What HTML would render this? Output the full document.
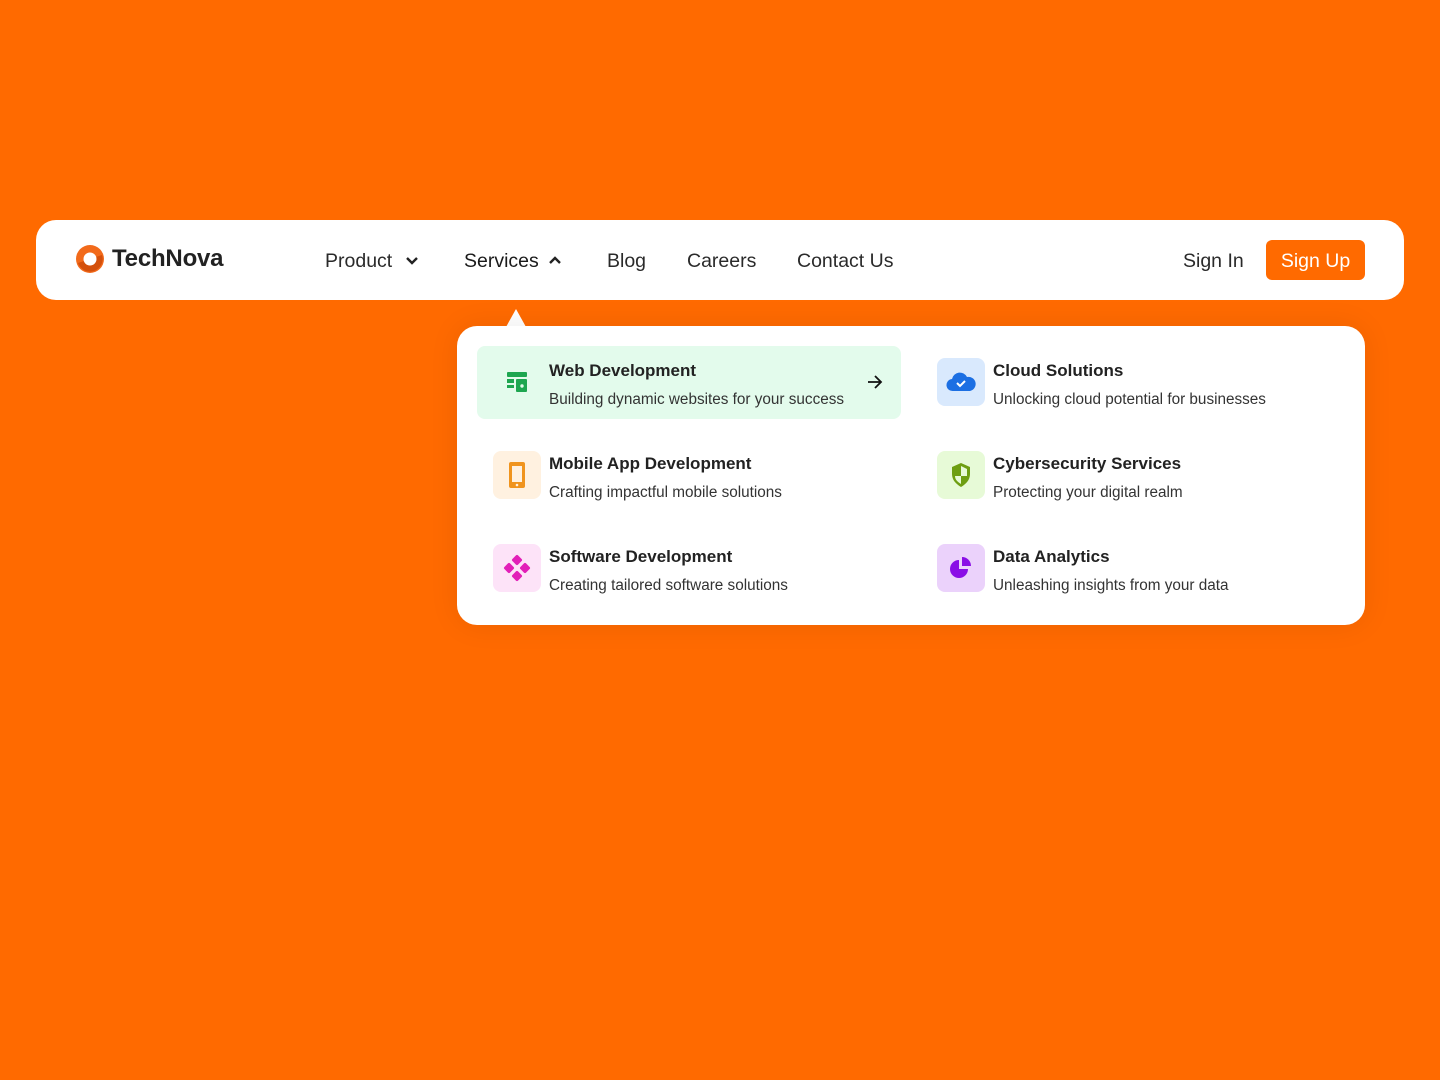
<!DOCTYPE html>
<html><head><meta charset="utf-8"><style>
*{margin:0;padding:0;box-sizing:border-box}
body{width:1440px;height:1080px;background:#FF6A00;font-family:"Liberation Sans",sans-serif;position:relative;overflow:hidden;color:#1f1f1f}
.nav{position:absolute;left:36px;top:220px;width:1368px;height:80px;background:#fff;border-radius:20px}
.t{position:absolute;white-space:nowrap}
.nl{font-size:19.5px;top:30px;color:#2a2a2a}
.dd{position:absolute;left:457px;top:326px;width:908px;height:299px;background:#fff;border-radius:20px;box-shadow:0 0 30px rgba(0,0,0,.08)}
.tri{position:absolute;left:506px;top:309px;width:0;height:0;border-left:10px solid transparent;border-right:10px solid transparent;border-bottom:18px solid #fff}
.ic{position:absolute;width:48px;height:48px;border-radius:8px;display:flex;align-items:center;justify-content:center}
.ti{font-size:17px;font-weight:bold;color:#222;margin-top:2px}
.de{font-size:15.3px;color:#333;margin-top:2px}
</style></head><body>
<div class="nav">
 <svg style="position:absolute;left:39px;top:24px" width="30" height="30" viewBox="0 0 30 30"><circle cx="15" cy="15" r="14" fill="#F26A1B"/><path d="M3 19 A12.5 12.5 0 0 0 27 11 L15 15z" fill="#d4500c"/><circle cx="15" cy="15" r="6.5" fill="#fff"/></svg>
 <div class="t" style="left:76px;top:25px;font-size:24px;font-weight:bold;color:#222;letter-spacing:-0.2px">TechNova</div>
 <div class="t nl" style="left:289px">Product</div>
 <svg style="position:absolute;left:369px;top:36px" width="14" height="10" viewBox="0 0 14 10"><path d="M2 2l5 5 5-5" stroke="#222" stroke-width="2.4" fill="none"/></svg>
 <div class="t nl" style="left:428px;color:#1a1a1a">Services</div>
 <svg style="position:absolute;left:512px;top:35px" width="14" height="10" viewBox="0 0 14 10"><path d="M2 8l5-5 5 5" stroke="#222" stroke-width="2.4" fill="none"/></svg>
 <div class="t nl" style="left:571px">Blog</div>
 <div class="t nl" style="left:651px">Careers</div>
 <div class="t nl" style="left:761px">Contact Us</div>
 <div class="t nl" style="left:1147px">Sign In</div>
 <div style="position:absolute;left:1230px;top:20px;width:99px;height:40px;background:#FF6A00;border-radius:6px;color:#fff;font-size:19.5px;text-align:center;line-height:42px">Sign Up</div>
</div>
<div class="tri"></div>
<div class="dd">
 <div style="position:absolute;left:20px;top:20px;width:424px;height:73px;background:#E3FBEC;border-radius:8px"></div>
 <div class="ic" style="left:36px;top:32px"><svg width="24" height="24" viewBox="0 0 24 24" fill="#1DA650"><rect x="2" y="2" width="20" height="5" rx="1"/><rect x="2" y="9" width="7" height="4"/><rect x="2" y="15" width="7" height="3"/><rect x="11" y="9" width="11" height="13" rx="1"/><circle cx="17" cy="16" r="1.7" fill="#E3FBEC"/></svg></div>
 <div class="t ti" style="left:92px;top:33px">Web Development</div>
 <div class="t de" style="left:92px;top:63px">Building dynamic websites for your success</div>
 <svg style="position:absolute;left:410px;top:49px" width="16" height="14" viewBox="0 0 16 14"><path d="M1 7h13M8 1l6 6-6 6" stroke="#111" stroke-width="1.8" fill="none"/></svg>

 <div class="ic" style="left:36px;top:125px;background:#FFF1E0"><svg width="24" height="30" viewBox="0 0 24 30"><rect x="4" y="2" width="16" height="26" rx="2" fill="#F0941E"/><rect x="7" y="6" width="10" height="16" fill="#FFF1E0"/><circle cx="12" cy="25" r="1.3" fill="#FFF1E0"/></svg></div>
 <div class="t ti" style="left:92px;top:126px">Mobile App Development</div>
 <div class="t de" style="left:92px;top:156px">Crafting impactful mobile solutions</div>

 <div class="ic" style="left:36px;top:218px;background:#FDE3F8"><svg width="28" height="28" viewBox="0 0 28 28" fill="#E21FB8"><rect x="10" y="2" width="8" height="8" rx="1.5" transform="rotate(45 14 6)"/><rect x="10" y="18" width="8" height="8" rx="1.5" transform="rotate(45 14 22)"/><rect x="2" y="10" width="8" height="8" rx="1.5" transform="rotate(45 6 14)"/><rect x="18" y="10" width="8" height="8" rx="1.5" transform="rotate(45 22 14)"/></svg></div>
 <div class="t ti" style="left:92px;top:219px">Software Development</div>
 <div class="t de" style="left:92px;top:249px">Creating tailored software solutions</div>

 <div class="ic" style="left:480px;top:32px;background:#D9E9FD"><svg width="32" height="24" viewBox="0 0 32 24"><path d="M8 21a6 6 0 0 1-1-12 8 8 0 0 1 15-2 6 6 0 0 1 3 14z" fill="#1C6FE3"/><path d="M12 13l3 3 5-5" stroke="#fff" stroke-width="2" fill="none"/></svg></div>
 <div class="t ti" style="left:536px;top:33px">Cloud Solutions</div>
 <div class="t de" style="left:536px;top:63px">Unlocking cloud potential for businesses</div>

 <div class="ic" style="left:480px;top:125px;background:#E7FAD7"><svg width="24" height="28" viewBox="0 0 24 28"><path d="M12 2l9 4v7c0 6-4 10-9 13C7 23 3 19 3 13V6z" fill="#6E9E12"/><path d="M12 5v10h6V8z" fill="#E7FAD7"/><path d="M6 15h6v8c-3-2-6-4-6-8z" fill="#E7FAD7"/></svg></div>
 <div class="t ti" style="left:536px;top:126px">Cybersecurity Services</div>
 <div class="t de" style="left:536px;top:156px">Protecting your digital realm</div>

 <div class="ic" style="left:480px;top:218px;background:#EBD2FB"><svg width="26" height="26" viewBox="0 0 26 26" fill="#8A0EE6"><path d="M11 5a9 9 0 1 0 9 9h-9z"/><path d="M14 2v9h9a9 9 0 0 0-9-9z"/></svg></div>
 <div class="t ti" style="left:536px;top:219px">Data Analytics</div>
 <div class="t de" style="left:536px;top:249px">Unleashing insights from your data</div>
</div>
</body></html>
